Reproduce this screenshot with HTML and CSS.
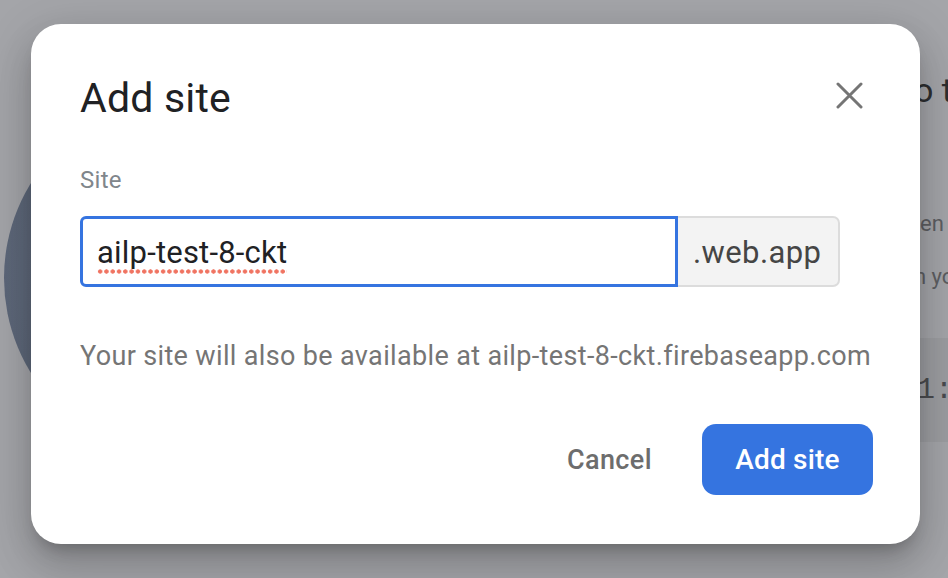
FILE: index.html
```html
<!DOCTYPE html>
<html lang="en">
<head>
<meta charset="utf-8">
<title>Add site</title>
<link rel="stylesheet" href="styles.css">
</head>
<body>
<div class="page">
  <div class="avatar"></div>
  <div class="content">
    <div class="page-heading">o t</div>
    <div class="page-text page-text--first">en</div>
    <div class="page-text page-text--second">n yo</div>
    <div class="code-block">1:</div>
  </div>
</div>

<div class="dialog" role="dialog" aria-labelledby="dlg-title">
  <div class="dialog-header">
    <h1 class="dialog-title" id="dlg-title">Add site</h1>
    <button class="close-btn" aria-label="Close">
      <svg width="27" height="27" viewBox="0 0 27 27"><path d="M2 2 L25 25 M25 2 L2 25" stroke="#757575" stroke-width="3" stroke-linecap="round" fill="none"/></svg>
    </button>
  </div>
  <div class="field-label">Site</div>
  <div class="input-row">
    <div class="input-field"><span class="input-value">ailp-test-8-ckt</span></div>
    <div class="input-suffix">.web.app</div>
  </div>
  <p class="help-text">Your site will also be available at ailp-test-8-ckt.firebaseapp.com</p>
  <div class="actions">
    <button class="btn-text">Cancel</button>
    <button class="btn-primary">Add site</button>
  </div>
</div>
</body>
</html>
```

FILE: styles.css
```css
html, body {
  margin: 0;
  padding: 0;
}
body {
  width: 948px;
  height: 578px;
  overflow: hidden;
  background: #a4a5a9;
  font-family: Roboto, "Liberation Sans", sans-serif;
  position: relative;
}
.page {
  display: flex;
  align-items: flex-start;
}
.avatar {
  flex: 0 0 auto;
  width: 362px;
  height: 362px;
  border-radius: 50%;
  margin-left: 4px;
  margin-top: 97px;
  background: radial-gradient(circle at 40% 50%, #646e80 0%, #5c6678 60%, #576274 100%);
}
.content {
  margin-left: 548px;
  margin-top: 70px;
  width: 400px;
  display: flex;
  flex-direction: column;
}
.page-heading {
  font-size: 34px;
  line-height: 40px;
  color: #2d2e30;
  white-space: nowrap;
}
.page-text {
  font-size: 22px;
  line-height: 28px;
  color: #5d5e62;
  white-space: nowrap;
}
.page-text--first {
  margin-top: 100px;
  padding-left: 6px;
}
.page-text--second {
  margin-top: 25px;
}
.code-block {
  margin-top: 47px;
  padding: 32px 0 32px 3px;
  background: #9c9da1;
  font-family: "Liberation Mono", monospace;
  font-size: 30px;
  line-height: 40px;
  color: #4a4b4e;
}

.dialog {
  position: absolute;
  left: 31px;
  top: 24px;
  width: 889px;
  height: 520px;
  box-sizing: border-box;
  padding: 50px 47px 48px 49px;
  background: #fff;
  border-radius: 30px;
  box-shadow: 0 11px 15px -7px rgba(0,0,0,.22), 0 24px 38px 3px rgba(0,0,0,.13), 0 9px 46px 8px rgba(0,0,0,.10);
  display: flex;
  flex-direction: column;
}
.dialog-header {
  display: flex;
  justify-content: space-between;
  align-items: flex-start;
}
.dialog-title {
  margin: 0;
  font-size: 41px;
  line-height: 48px;
  font-weight: 400;
  color: #202124;
  letter-spacing: 0.2px;
}
.close-btn {
  border: 0;
  background: none;
  padding: 0;
  margin: 8px 10px 0 0;
  width: 27px;
  height: 27px;
  display: block;
}
.close-btn svg {
  display: block;
}
.field-label {
  margin-top: 44px;
  font-size: 24px;
  line-height: 28px;
  color: #80868b;
  letter-spacing: 0.3px;
}
.input-row {
  margin-top: 22px;
  display: flex;
  width: 760px;
  height: 71px;
}
.input-field {
  box-sizing: border-box;
  width: 598px;
  height: 71px;
  border: 3px solid #3574e0;
  border-radius: 6px 0 0 6px;
  padding: 2px 0 0 14px;
  display: flex;
  align-items: center;
}
.input-value {
  position: relative;
  font-size: 31px;
  line-height: 36px;
  color: #202124;
  letter-spacing: 0.2px;
}
.input-value::after {
  content: "";
  position: absolute;
  left: 0;
  right: 0;
  bottom: -3px;
  height: 5px;
  background: radial-gradient(circle, #f07462 1.9px, transparent 2.4px) 0 0 / 6.3px 5px repeat-x;
}
.input-suffix {
  flex: 1;
  box-sizing: border-box;
  background: #f3f3f3;
  border: 2px solid #dcdcdc;
  border-left: 0;
  border-radius: 0 7px 7px 0;
  padding: 2px 0 0 15px;
  display: flex;
  align-items: center;
  font-size: 31px;
  letter-spacing: 0.4px;
  color: #454545;
}
.help-text {
  margin: 54px 0 0;
  font-size: 27px;
  line-height: 30px;
  letter-spacing: 0.35px;
  color: #757575;
  white-space: nowrap;
}
.actions {
  margin-top: 53px;
  display: flex;
  justify-content: flex-end;
  align-items: center;
  gap: 50px;
}
.btn-text {
  border: 0;
  background: none;
  padding: 0;
  font-family: Roboto, "Liberation Sans", sans-serif;
  font-size: 27px;
  letter-spacing: 0.4px;
  font-weight: 500;
  color: #6d6d6d;
}
.btn-primary {
  border: 0;
  width: 171px;
  height: 71px;
  border-radius: 14px;
  background: #3574e0;
  color: #fff;
  font-family: Roboto, "Liberation Sans", sans-serif;
  font-size: 28px;
  letter-spacing: 0.2px;
  font-weight: 500;
  padding: 0;
}
```
